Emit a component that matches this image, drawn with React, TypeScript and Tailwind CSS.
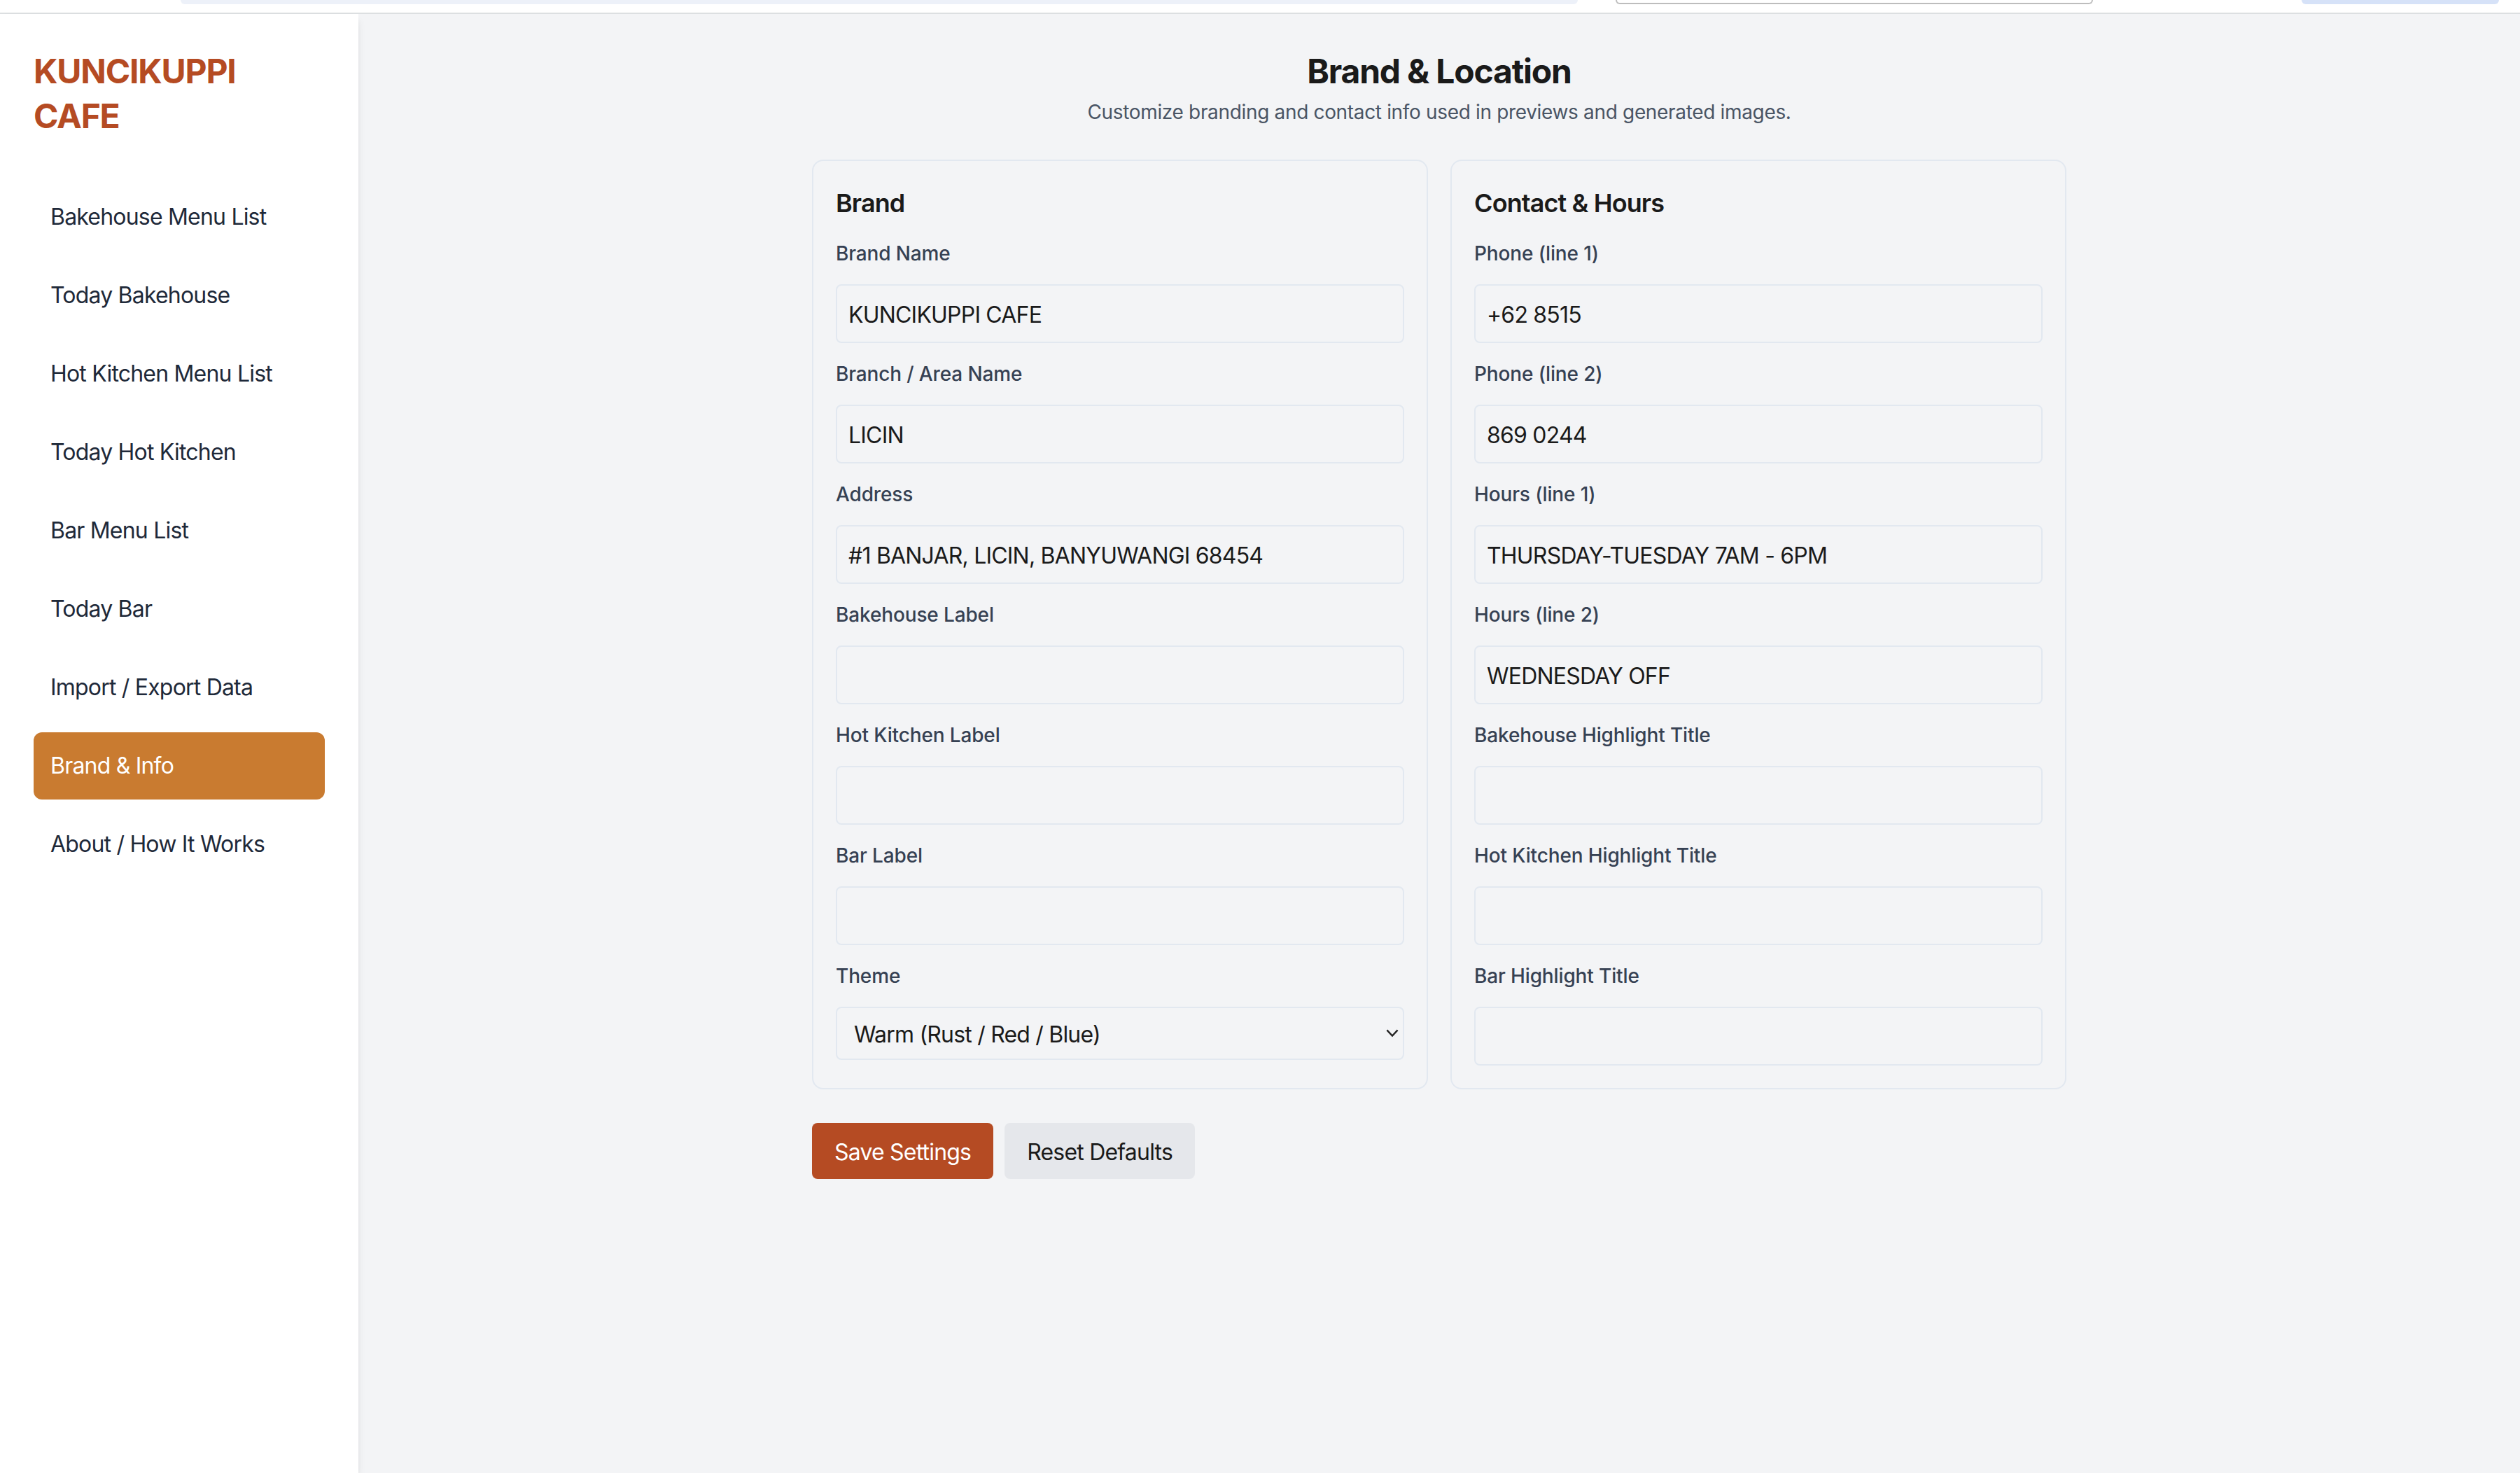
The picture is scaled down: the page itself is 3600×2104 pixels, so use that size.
import React from "react";

const navItems = [
  "Bakehouse Menu List",
  "Today Bakehouse",
  "Hot Kitchen Menu List",
  "Today Hot Kitchen",
  "Bar Menu List",
  "Today Bar",
  "Import / Export Data",
  "Brand & Info",
  "About / How It Works",
];

const brandFields = [
  { label: "Brand Name", value: "KUNCIKUPPI CAFE" },
  { label: "Branch / Area Name", value: "LICIN" },
  { label: "Address", value: "#1 BANJAR, LICIN, BANYUWANGI 68454" },
  { label: "Bakehouse Label", value: "" },
  { label: "Hot Kitchen Label", value: "" },
  { label: "Bar Label", value: "" },
];

const contactFields = [
  { label: "Phone (line 1)", value: "+62 8515" },
  { label: "Phone (line 2)", value: "869 0244" },
  { label: "Hours (line 1)", value: "THURSDAY-TUESDAY 7AM - 6PM" },
  { label: "Hours (line 2)", value: "WEDNESDAY OFF" },
  { label: "Bakehouse Highlight Title", value: "" },
  { label: "Hot Kitchen Highlight Title", value: "" },
  { label: "Bar Highlight Title", value: "" },
];

function Field({ label, value }: { label: string; value: string }) {
  return (
    <div>
      <label className="block text-sm leading-5 font-medium tracking-[-0.005em] text-gray-700 mb-3">{label}</label>
      <input
        readOnly
        value={value}
        className="block w-full rounded border border-[#e2e8f0] bg-transparent px-2 pt-[9px] pb-[7px] text-base leading-6 tracking-tight text-[#1a1a1a] outline-none"
      />
    </div>
  );
}

export default function App() {
  return (
    <div className="w-[1800px] min-h-[1052px] [zoom:2] flex flex-col bg-[#f3f4f6] font-['Inter',sans-serif]">
      {/* browser remnant strip */}
      <div className="h-[10px] shrink-0 bg-white border-b border-[#dcdfe1] flex items-start">
        <div className="ml-[129px] w-[998px] h-[3px] rounded-b-lg bg-[#edf1f9]" />
        <div className="ml-[27px] w-[341px] h-[3px] rounded-b-md border-x border-b border-[#bdbdbd] bg-white" />
        <div className="ml-[149px] w-[141px] h-[3px] rounded-b-full bg-[#d6e2f8]" />
      </div>

      <div className="flex flex-1">
        {/* Sidebar */}
        <aside className="w-64 shrink-0 bg-white shadow-md px-6 pt-[25px] z-10">
          <div className="text-2xl leading-8 font-bold tracking-tight text-[#b54b23]">KUNCIKUPPI CAFE</div>
          <nav className="mt-8 flex flex-col gap-2">
            {navItems.map((item) => {
              const active = item === "Brand & Info";
              return (
                <div
                  key={item}
                  className={
                    active
                      ? "rounded-md bg-[#c97b30] px-3 py-3 text-base leading-6 tracking-tight text-white"
                      : "rounded-md px-3 py-3 text-base leading-6 tracking-tight text-gray-800"
                  }
                >
                  {item}
                </div>
              );
            })}
          </nav>
        </aside>

        {/* Main */}
        <main className="flex-1 px-6 pt-[25px] pb-6">
          <div className="mx-auto max-w-4xl">
            <h1 className="text-center text-2xl leading-8 font-bold tracking-tight text-[#1a1a1a]">Brand &amp; Location</h1>
            <p className="mt-[3px] text-center text-sm leading-5 tracking-[-0.012em] text-gray-600">
              Customize branding and contact info used in previews and generated images.
            </p>

            <div className="mt-6 grid grid-cols-2 gap-4">
              <section className="rounded-lg border border-[#e2e8f0] p-4">
                <h2 className="mb-3 text-lg leading-7 font-semibold tracking-tight text-[#1a1a1a]">Brand</h2>
                <div className="space-y-3">
                  {brandFields.map((f) => (
                    <Field key={f.label} label={f.label} value={f.value} />
                  ))}
                  <div>
                    <label className="block text-sm leading-5 font-medium tracking-[-0.005em] text-gray-700 mb-3">Theme</label>
                    <div className="relative">
                      <select
                        defaultValue="warm"
                        className="block w-full appearance-none rounded border border-[#e2e8f0] bg-transparent pt-[7px] pb-[5px] pl-3 pr-8 text-base leading-6 tracking-tight text-[#1a1a1a] outline-none"
                      >
                        <option value="warm">Warm (Rust / Red / Blue)</option>
                      </select>
                      <svg
                        className="pointer-events-none absolute right-[4px] top-1/2 -translate-y-1/2"
                        width="9"
                        height="6"
                        viewBox="0 0 9 6"
                        fill="none"
                      >
                        <polyline points="0.7,0.7 4.5,4.8 8.3,0.7" stroke="#222" strokeWidth="1.2" />
                      </svg>
                    </div>
                  </div>
                </div>
              </section>

              <section className="rounded-lg border border-[#e2e8f0] p-4">
                <h2 className="mb-3 text-lg leading-7 font-semibold tracking-tight text-[#1a1a1a]">Contact &amp; Hours</h2>
                <div className="space-y-3">
                  {contactFields.map((f) => (
                    <Field key={f.label} label={f.label} value={f.value} />
                  ))}
                </div>
              </section>
            </div>

            <div className="mt-6 flex gap-2">
              <button className="rounded bg-[#b54b23] px-4 pt-[9px] pb-[7px] text-base leading-6 tracking-tight text-white">Save Settings</button>
              <button className="rounded bg-gray-200 px-4 pt-[9px] pb-[7px] text-base leading-6 tracking-tight text-[#1a1a1a]">Reset Defaults</button>
            </div>
          </div>
        </main>
      </div>
    </div>
  );
}
